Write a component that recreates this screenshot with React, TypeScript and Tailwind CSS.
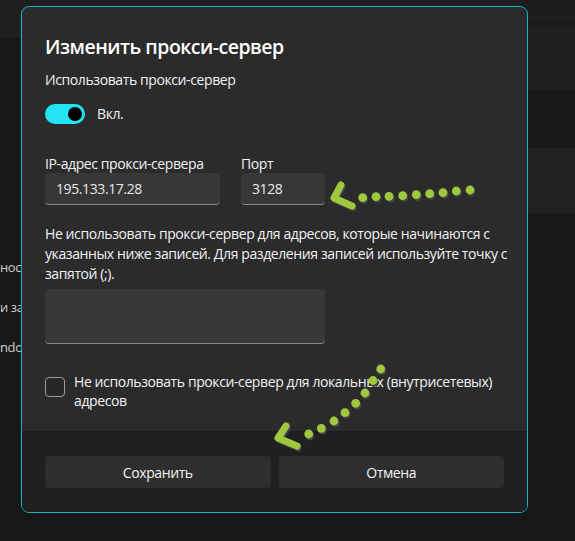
import React from "react";

const font = { fontFamily: '"Open Sans", "Noto Sans", sans-serif' };

// dotted annotation arrows drawn over the dialog
const dotsTop: [number, number][] = [
  [362.7, 197.7],
  [376, 196.7],
  [389, 196.3],
  [402.7, 195.7],
  [416.3, 194.7],
  [429.7, 193.7],
  [443, 192.7],
  [456.3, 191],
  [470, 190],
];

const dotsBottom: [number, number][] = [
  [380.7, 369],
  [373, 380.5],
  [365, 393],
  [355.7, 403.3],
  [345, 412.7],
  [334, 421],
  [321.3, 428.3],
  [308.7, 434],
];

function Arrows() {
  const green = "#a0c83f";
  const shade = "#454545";
  return (
    <svg className="pointer-events-none absolute inset-0" width={575} height={541} viewBox="0 0 575 541">
      <g fill={shade} stroke={shade}>
        {dotsTop.concat(dotsBottom).map(([x, y], i) => (
          <circle key={i} cx={x + 1.2} cy={y + 1.8} r={4.4} stroke="none" />
        ))}
        <path d="M341 185 L334 198 L352 206" fill="none" strokeWidth={7} strokeLinecap="round" strokeLinejoin="round" transform="translate(1.2 1.8)" />
        <path d="M286 426 L278 438 L297 446" fill="none" strokeWidth={7} strokeLinecap="round" strokeLinejoin="round" transform="translate(1.2 1.8)" />
      </g>
      <g fill={green} stroke={green}>
        {dotsTop.concat(dotsBottom).map(([x, y], i) => (
          <circle key={i} cx={x} cy={y} r={4.4} stroke="none" />
        ))}
        <path d="M341 185 L334 198 L352 206" fill="none" strokeWidth={7} strokeLinecap="round" strokeLinejoin="round" />
        <path d="M286 426 L278 438 L297 446" fill="none" strokeWidth={7} strokeLinecap="round" strokeLinejoin="round" />
      </g>
    </svg>
  );
}

function Backdrop() {
  return (
    <div className="flex h-full w-full">
      <div className="flex w-[122px] flex-col">
        <div className="h-[38px] bg-[#1f1f1f]" />
        <div className="mt-[220px] flex flex-col gap-[21px] whitespace-nowrap text-[13px] leading-[19px] text-[#cfcfcf]">
          <span>ности</span>
          <span>и записи</span>
          <span>ndows</span>
        </div>
      </div>
      <div className="flex flex-1 flex-col">
        <div className="h-[20px] bg-[#1d1d1d]" />
        <div className="h-[5px] bg-[#1a1a1a]" />
        <div className="h-[65px] bg-[#202020]" />
        <div className="h-[58px] bg-[#181818]" />
        <div className="h-[65px] bg-[#212121]" />
      </div>
    </div>
  );
}

function Field({ label, value, className }: { label: string; value: string; className: string }) {
  return (
    <div className={"flex flex-col " + className}>
      <span className="text-[14px] leading-[18px] text-[#f2f2f2]">{label}</span>
      <div className="flex h-8 items-center rounded-[4px] border-b border-[#8a8a8a] bg-[#373737] px-[11px] text-[14px] text-[#e8e8e8]">
        {value}
      </div>
    </div>
  );
}

export default function App() {
  return (
    <div className="relative h-[541px] w-[575px] overflow-hidden bg-[#171717] tracking-[-0.4px]" style={font}>
      <Backdrop />

      <div className="absolute left-[21px] top-[6px] flex h-[507px] w-[507px] flex-col overflow-hidden rounded-lg border border-[#13b4c3] bg-[#2b2b2b]">
        <div className="flex flex-1 flex-col px-[23px] pt-[26px]">
          <h1 className="text-[19.5px] font-semibold leading-[28px] tracking-[-0.5px] text-white">Изменить прокси-сервер</h1>
          <p className="mt-[9px] text-[14px] leading-[20px] text-[#f2f2f2]">Использовать прокси-сервер</p>

          <div className="mt-[13px] flex items-center gap-3">
            <div className="flex h-5 w-10 items-center justify-end rounded-full bg-[#22e4f2] pr-[3px]">
              <div className="h-[14px] w-[14px] rounded-full bg-black" />
            </div>
            <span className="text-[14px] text-[#f2f2f2]">Вкл.</span>
          </div>

          <div className="mt-[31px] flex gap-[21px]">
            <Field label="IP-адрес прокси-сервера" value="195.133.17.28" className="w-[175px]" />
            <Field label="Порт" value="3128" className="w-[84px]" />
          </div>

          <p className="mt-[19px] whitespace-nowrap text-[14px] leading-[20px] text-[#f2f2f2]">
            Не использовать прокси-сервер для адресов, которые начинаются с
            <br />
            указанных ниже записей. Для разделения записей используйте точку с
            <br />
            запятой (;).
          </p>

          <div className="mt-[5px] h-[55px] w-[280px] rounded-[4px] border-b border-[#8a8a8a] bg-[#373737]" />

          <div className="mt-[28px] flex items-start gap-[9px]">
            <div className="mt-[5px] h-5 w-5 shrink-0 rounded-[4px] border border-[#9a9a9a] bg-[#272727]" />
            <span className="whitespace-nowrap text-[14px] leading-[19px] text-[#f2f2f2]">
              Не использовать прокси-сервер для локальных (внутрисетевых)
              <br />
              адресов
            </span>
          </div>
        </div>

        <div className="flex h-[81px] items-center gap-2 border-t border-[#1d1d1d] bg-[#202020] px-[23px]">
          <button className="h-8 flex-1 rounded-[4px] bg-[#2e2e2e] text-[14px] text-[#f2f2f2]">Сохранить</button>
          <button className="h-8 flex-1 rounded-[4px] bg-[#2e2e2e] text-[14px] text-[#f2f2f2]">Отмена</button>
        </div>
      </div>

      <Arrows />
    </div>
  );
}
